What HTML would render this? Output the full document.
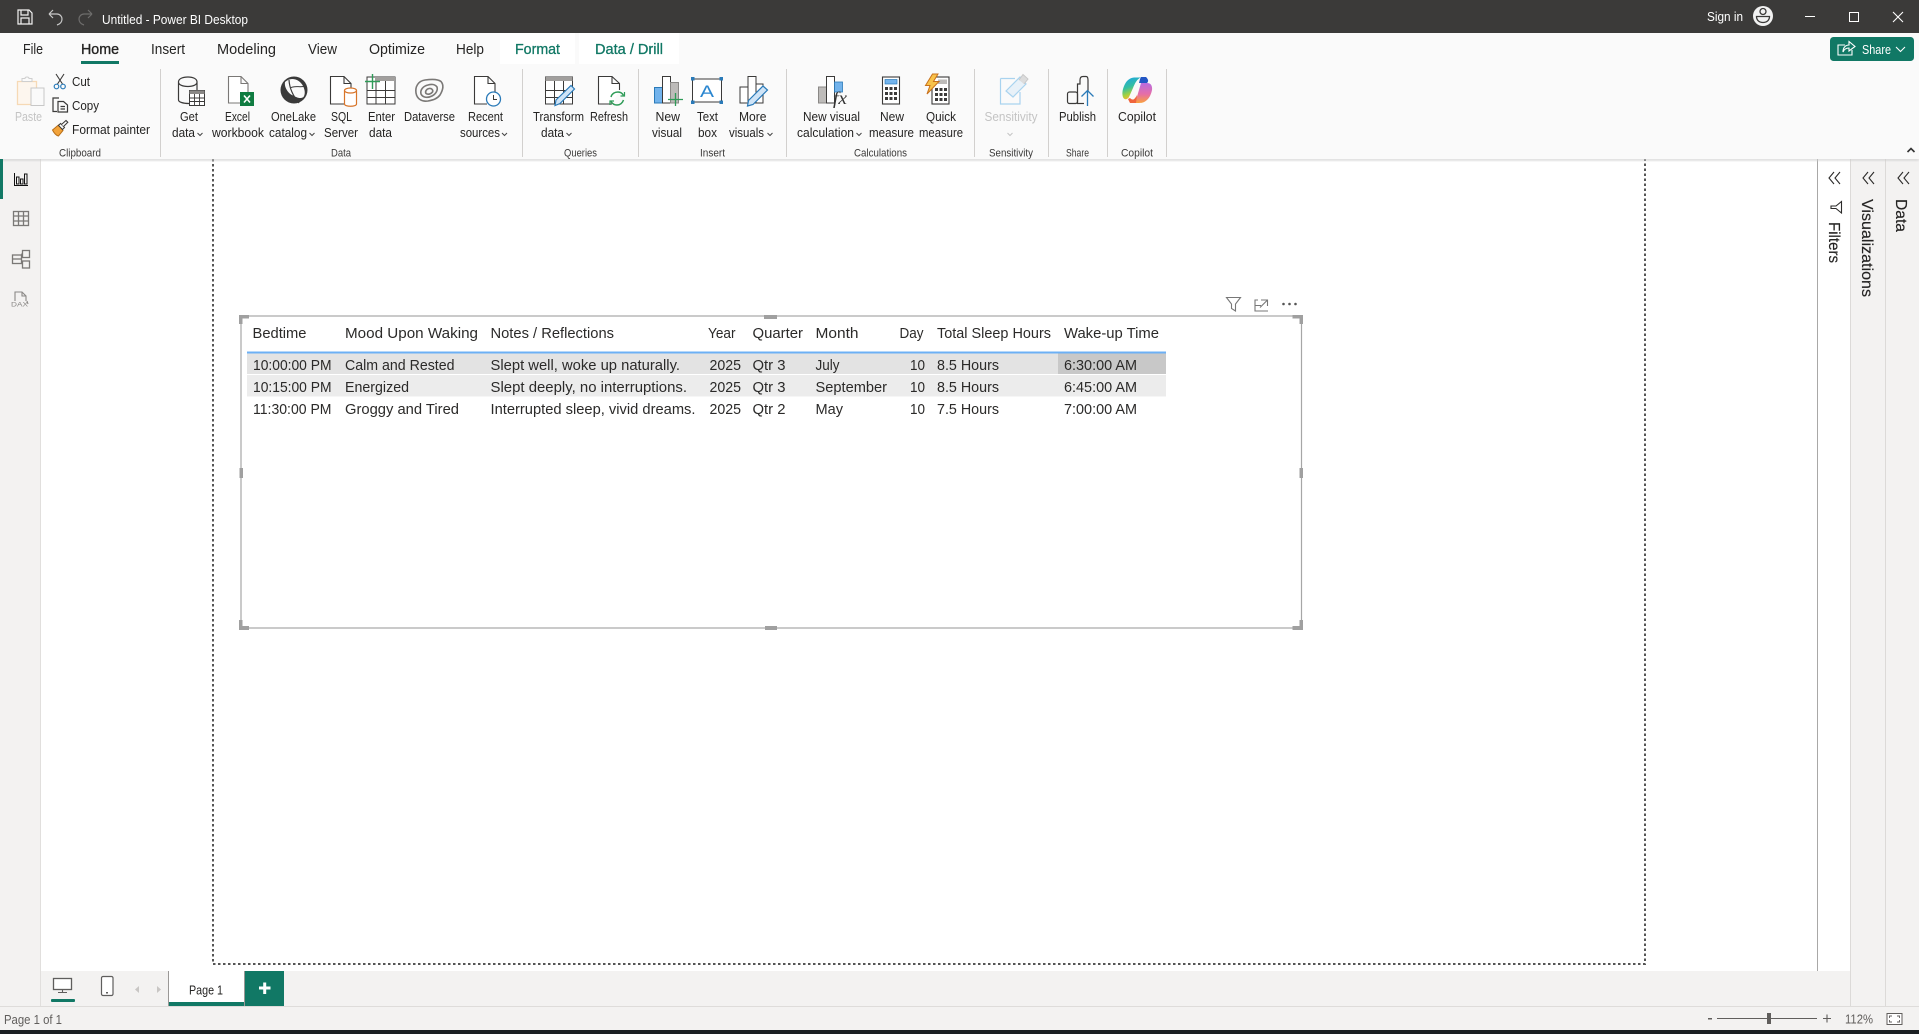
<!DOCTYPE html>
<html lang="en">
<head>
<meta charset="utf-8">
<title>Untitled - Power BI Desktop</title>
<style>
html,body{margin:0;padding:0;width:1919px;height:1034px;overflow:hidden;background:#fff}
svg{display:block;position:absolute;left:0;top:0}
text{font-family:"Liberation Sans",sans-serif;fill:#252423;white-space:pre}
.t{font-size:14.5px}
.sb{stroke:#252423;stroke-width:.35px}
.ac{fill:#117865;stroke:#117865;stroke-width:.3px}
.r{font-size:12.5px}
.g{font-size:11px;fill:#3b3a39}
.w{fill:#fff}
.d{fill:#c4c4c4}
.c{font-size:15px;fill:#2b2a29}
.ic{fill:none;stroke:#3b3a39;stroke-width:1.2}
.gy{fill:none;stroke:#7a7876;stroke-width:1.3}
.v{font-size:15.5px;stroke:#252423;stroke-width:.15px}
</style>
</head>
<body>
<svg width="1919" height="1034" viewBox="0 0 1919 1034" xmlns="http://www.w3.org/2000/svg">
<defs>
<linearGradient id="cp1" x1="0" y1="0" x2=".3" y2="1"><stop offset="0" stop-color="#1aa3e8"/><stop offset=".5" stop-color="#35c0a0"/><stop offset=".8" stop-color="#a6d13e"/><stop offset="1" stop-color="#f4b830"/></linearGradient>
<linearGradient id="cp2" x1=".5" y1="0" x2=".5" y2="1"><stop offset="0" stop-color="#b86ce0"/><stop offset=".55" stop-color="#e56ea8"/><stop offset="1" stop-color="#f9a13c"/></linearGradient>
<filter id="sh" x="0" y="0" width="100%" height="140%"><feGaussianBlur stdDeviation="1.5"/></filter>
</defs>

<!-- base -->
<rect width="1919" height="1034" fill="#fff"/>
<rect x="1818" y="159" width="33" height="812" fill="#fff"/>
<rect x="1851" y="159" width="68" height="847" fill="#f3f2f1"/>
<rect x="0" y="159" width="40" height="847" fill="#f3f2f1"/>
<rect x="40" y="159" width="1" height="847" fill="#e1dfdd"/>
<rect x="41" y="971" width="1810" height="35" fill="#f3f2f1"/>
<rect x="1817" y="159" width="1" height="812" fill="#a9a8a7"/>
<rect x="1850" y="159" width="1" height="847" fill="#dcdad8"/>
<rect x="1885" y="159" width="1" height="847" fill="#dcdad8"/>

<!-- canvas dotted -->
<path d="M213 159V964H1645V159" fill="none" stroke="#555" stroke-width="2" stroke-dasharray="2.5 2.5"/>

<!-- ribbon shadow + ribbon -->
<rect x="0" y="158" width="1919" height="2.500" fill="#ccc" filter="url(#sh)"/>
<rect x="0" y="33" width="1919" height="126" fill="#fafafa"/>
<rect x="500" y="33" width="75" height="31" fill="#fff"/>
<rect x="579" y="33" width="100" height="31" fill="#fff"/>

<!-- title bar -->
<rect x="0" y="0" width="1919" height="33" fill="#3b3a39"/>
<g fill="none" stroke="#f2f2f2" stroke-width="1.2">
<path d="M18 10H29L32 13V24H18Z"/><path d="M21 10V15H28V10"/><path d="M21 24V18H29V24"/>
</g>
<path d="M49 14H57C60 14 62 16.500 62 19C62 22 60 24 57 25M49 14L53 10M49 14L53 18" fill="none" stroke="#c8c8c8" stroke-width="1.200"/>
<path d="M92 14H84C81 14 79 16.500 79 19C79 22 81 24 84 25M92 14L88 10M92 14L88 18" fill="none" stroke="#6e6d6c" stroke-width="1.200"/>
<text x="102" y="24" class="w" style="font-size:12.500px" textLength="146" lengthAdjust="spacingAndGlyphs">Untitled - Power BI Desktop</text>
<text x="1707" y="21" class="w" style="font-size:12.500px" textLength="36" lengthAdjust="spacingAndGlyphs">Sign in</text>
<circle cx="1763" cy="16" r="10" fill="#f2f2f2"/>
<circle cx="1763" cy="11.500" r="3" fill="none" stroke="#3b3a39" stroke-width="1.300"/>
<path d="M1756.500 16.500H1769.500C1769.500 20 1767 22.500 1763 22.500C1759 22.500 1756.500 20 1756.500 16.500Z" fill="none" stroke="#3b3a39" stroke-width="1.300"/>
<rect x="1805" y="16" width="10" height="1" fill="#fff"/>
<rect x="1849.500" y="12.500" width="9" height="9" fill="none" stroke="#fff" stroke-width="1"/>
<path d="M1893 12L1903 22M1903 12L1893 22" stroke="#fff" stroke-width="1.100"/>

<!-- tabs -->
<text x="23" y="54" class="t" textLength="20" lengthAdjust="spacingAndGlyphs">File</text>
<text x="81" y="54" class="t sb" textLength="38" lengthAdjust="spacingAndGlyphs">Home</text>
<rect x="81" y="61" width="38" height="3" fill="#117865"/>
<text x="151" y="54" class="t" textLength="34" lengthAdjust="spacingAndGlyphs">Insert</text>
<text x="217" y="54" class="t" textLength="59" lengthAdjust="spacingAndGlyphs">Modeling</text>
<text x="308" y="54" class="t" textLength="29" lengthAdjust="spacingAndGlyphs">View</text>
<text x="369" y="54" class="t" textLength="56" lengthAdjust="spacingAndGlyphs">Optimize</text>
<text x="456" y="54" class="t" textLength="28" lengthAdjust="spacingAndGlyphs">Help</text>
<text x="515" y="54" class="t ac" textLength="45" lengthAdjust="spacingAndGlyphs">Format</text>
<text x="595" y="54" class="t ac" textLength="68" lengthAdjust="spacingAndGlyphs">Data / Drill</text>

<!-- share -->
<rect x="1830" y="37" width="84" height="24" rx="3.500" fill="#117865"/>
<path d="M1845 45H1838V55H1852V50M1843 52C1843 47 1846 45 1849 45V41.500L1855 46.500L1849 51V48C1846 48 1844 49.500 1843 52Z" fill="none" stroke="#fff" stroke-width="1.100"/>
<text x="1862" y="54" class="w" style="font-size:13px" textLength="29" lengthAdjust="spacingAndGlyphs">Share</text>
<path d="M1896 47L1900.500 51.500L1905 47" fill="none" stroke="#fff" stroke-width="1.100"/>
<path d="M1907.500 152L1911 148.500L1914.500 152" fill="none" stroke="#333" stroke-width="1.600"/>

<!-- separators -->
<g fill="#d2d0ce">
<rect x="160" y="69" width="1" height="88"/><rect x="522" y="69" width="1" height="88"/><rect x="638" y="69" width="1" height="88"/>
<rect x="786" y="69" width="1" height="88"/><rect x="974" y="69" width="1" height="88"/><rect x="1048" y="69" width="1" height="88"/>
<rect x="1107" y="69" width="1" height="88"/><rect x="1166" y="69" width="1" height="88"/>
</g>

<!-- ribbon labels -->
<g class="r">
<text x="15" y="121" class="r d" textLength="27" lengthAdjust="spacingAndGlyphs">Paste</text>
<text x="72" y="86" class="r" textLength="18" lengthAdjust="spacingAndGlyphs">Cut</text>
<text x="72" y="110" class="r" textLength="27" lengthAdjust="spacingAndGlyphs">Copy</text>
<text x="72" y="134" class="r" textLength="78" lengthAdjust="spacingAndGlyphs">Format painter</text>
<text x="180" y="121" class="r" textLength="18" lengthAdjust="spacingAndGlyphs">Get</text>
<text x="172" y="137" class="r" textLength="23" lengthAdjust="spacingAndGlyphs">data</text>
<text x="225" y="121" class="r" textLength="25" lengthAdjust="spacingAndGlyphs">Excel</text>
<text x="212" y="137" class="r" textLength="52" lengthAdjust="spacingAndGlyphs">workbook</text>
<text x="271" y="121" class="r" textLength="45" lengthAdjust="spacingAndGlyphs">OneLake</text>
<text x="269" y="137" class="r" textLength="38" lengthAdjust="spacingAndGlyphs">catalog</text>
<text x="331" y="121" class="r" textLength="21" lengthAdjust="spacingAndGlyphs">SQL</text>
<text x="324" y="137" class="r" textLength="34" lengthAdjust="spacingAndGlyphs">Server</text>
<text x="368" y="121" class="r" textLength="27" lengthAdjust="spacingAndGlyphs">Enter</text>
<text x="369" y="137" class="r" textLength="23" lengthAdjust="spacingAndGlyphs">data</text>
<text x="404" y="121" class="r" textLength="51" lengthAdjust="spacingAndGlyphs">Dataverse</text>
<text x="468" y="121" class="r" textLength="35" lengthAdjust="spacingAndGlyphs">Recent</text>
<text x="460" y="137" class="r" textLength="40" lengthAdjust="spacingAndGlyphs">sources</text>
<text x="533" y="121" class="r" textLength="51" lengthAdjust="spacingAndGlyphs">Transform</text>
<text x="541" y="137" class="r" textLength="23" lengthAdjust="spacingAndGlyphs">data</text>
<text x="590" y="121" class="r" textLength="38" lengthAdjust="spacingAndGlyphs">Refresh</text>
<text x="655.500" y="121" class="r" textLength="24.500" lengthAdjust="spacingAndGlyphs">New</text>
<text x="652" y="137" class="r" textLength="30" lengthAdjust="spacingAndGlyphs">visual</text>
<text x="697" y="121" class="r" textLength="21" lengthAdjust="spacingAndGlyphs">Text</text>
<text x="698" y="137" class="r" textLength="19" lengthAdjust="spacingAndGlyphs">box</text>
<text x="739" y="121" class="r" textLength="27.500" lengthAdjust="spacingAndGlyphs">More</text>
<text x="729" y="137" class="r" textLength="35" lengthAdjust="spacingAndGlyphs">visuals</text>
<text x="803" y="121" class="r" textLength="57" lengthAdjust="spacingAndGlyphs">New visual</text>
<text x="797" y="137" class="r" textLength="57" lengthAdjust="spacingAndGlyphs">calculation</text>
<text x="880" y="121" class="r" textLength="24" lengthAdjust="spacingAndGlyphs">New</text>
<text x="869" y="137" class="r" textLength="45" lengthAdjust="spacingAndGlyphs">measure</text>
<text x="926" y="121" class="r" textLength="30" lengthAdjust="spacingAndGlyphs">Quick</text>
<text x="919" y="137" class="r" textLength="44" lengthAdjust="spacingAndGlyphs">measure</text>
<text x="984.500" y="121" class="r d" textLength="53" lengthAdjust="spacingAndGlyphs">Sensitivity</text>
<text x="1059" y="121" class="r" textLength="37" lengthAdjust="spacingAndGlyphs">Publish</text>
<text x="1118" y="121" class="r" textLength="38" lengthAdjust="spacingAndGlyphs">Copilot</text>
</g>
<g fill="none" stroke="#444" stroke-width="1">
<path d="M197.500 133L200 135.500L202.500 133"/><path d="M309.500 133L312 135.500L314.500 133"/><path d="M502 133L504.500 135.500L507 133"/>
<path d="M566.500 133L569 135.500L571.500 133"/><path d="M767.500 133L770 135.500L772.500 133"/><path d="M856.500 133L859 135.500L861.500 133"/>
<path d="M1007.500 133L1010 135.500L1012.500 133" stroke="#c4c4c4"/>
</g>
<!-- group labels -->
<text x="59" y="156.500" class="g" textLength="42" lengthAdjust="spacingAndGlyphs">Clipboard</text>
<text x="331" y="156.500" class="g" textLength="20" lengthAdjust="spacingAndGlyphs">Data</text>
<text x="564" y="156.500" class="g" textLength="33" lengthAdjust="spacingAndGlyphs">Queries</text>
<text x="700" y="156.500" class="g" textLength="25" lengthAdjust="spacingAndGlyphs">Insert</text>
<text x="854" y="156.500" class="g" textLength="53" lengthAdjust="spacingAndGlyphs">Calculations</text>
<text x="989" y="156.500" class="g" textLength="44" lengthAdjust="spacingAndGlyphs">Sensitivity</text>
<text x="1066" y="156.500" class="g" textLength="23" lengthAdjust="spacingAndGlyphs">Share</text>
<text x="1121" y="156.500" class="g" textLength="32" lengthAdjust="spacingAndGlyphs">Copilot</text>

<!-- paste -->
<path d="M17.500 81.500H36.500V104.500H17.500Z" fill="#fdf6ee" stroke="#f6d9b5" stroke-width="1.300"/>
<path d="M22 81.500V78.500H25C25 76.500 29 76.500 29 78.500H32V81.500Z" fill="#fafafa" stroke="#cfcfcf" stroke-width="1"/>
<rect x="31" y="88" width="13" height="17.500" fill="#fafafa" stroke="#c8c8c8" stroke-width="1"/>
<!-- cut -->
<path d="M56 74L62.500 84M64 74L57.500 84" fill="none" stroke="#3b3a39" stroke-width="1.100"/>
<circle cx="56.500" cy="86.500" r="2.300" fill="none" stroke="#2a7ab8" stroke-width="1.200"/>
<circle cx="63" cy="86.500" r="2.300" fill="none" stroke="#2a7ab8" stroke-width="1.200"/>
<!-- copy -->
<path d="M59 98H53V111.500H57" class="ic"/>
<path d="M58 101.500H63.500L67.500 105V112H58Z" class="ic"/>
<path d="M60.500 106.500H65M60.500 109H65" class="ic" stroke-width=".9"/>
<!-- format painter -->
<path d="M52.500 130L58.500 125L63 130.500L58.500 136C56 135.500 54 133 52.500 130Z" fill="#f2a33a" stroke="#b96f18" stroke-width="1"/>
<path d="M58.500 125.500L60.500 123.500L64.500 127.500L62.500 129.500Z" fill="#fff" stroke="#3b3a39" stroke-width="1"/>
<path d="M61.500 124.500L66 120.500L67.800 122.300L63.500 126.500" fill="#fff" stroke="#3b3a39" stroke-width="1.100"/>
<!-- get data -->
<path d="M178.500 82V100C178.500 102 183 103.500 189 103.500M197 81.500V90M178.500 82C178.500 79 182 77 188 77C193.500 77 197 79 197 82C197 84.500 193.500 86.500 188 86.500C182 86.500 178.500 84.500 178.500 82Z" class="ic" fill="#fafafa"/>
<rect x="189.500" y="90.500" width="15" height="15" fill="#fff" stroke="#3b3a39" stroke-width="1"/>
<rect x="189.500" y="90.500" width="15" height="3.500" fill="#8a8886"/>
<path d="M189.500 98H204.500M189.500 101.500H204.500M194.500 94V105M199.500 94V105" stroke="#3b3a39" stroke-width=".9" fill="none"/>
<!-- excel -->
<path d="M240 103H228.500V76.500H241L248 83.500V92M241 76.500V83.500H248" fill="#fff" stroke="#7a7876" stroke-width="1.100"/>
<rect x="240" y="92" width="14" height="14" fill="#107c41"/>
<path d="M244 95.500L250 102.500M250 95.500L244 102.500" stroke="#fff" stroke-width="1.600"/>
<!-- onelake -->
<circle cx="294" cy="90" r="13.500" fill="#3a3a3a"/>
<path d="M285 82C287 80 290 79 292 79C297 79 301 82 303 86C305 90 305.500 94 303.500 97C300 99.500 296 97 292 95C288 93 284 87 285 82Z" fill="#fafafa"/>
<path d="M289 80C289.500 88 293 96 299 103" fill="none" stroke="#3a3a3a" stroke-width="1.200"/>
<path d="M290 88C295 85 300 88 306 86" fill="none" stroke="#3a3a3a" stroke-width="1"/>
<!-- sql -->
<path d="M345 104H330.500V76.500H344L351 83.500V88M344 76.500V83.500H351" fill="#fff" stroke="#3b3a39" stroke-width="1.100"/>
<path d="M344.500 91V104C344.500 107 356.500 107 356.500 104V91Z" fill="#fff" stroke="#d8752a" stroke-width="1.200"/>
<ellipse cx="350.500" cy="90.500" rx="6" ry="2.500" fill="#fff" stroke="#d8752a" stroke-width="1.200"/>
<!-- enter data -->
<rect x="367" y="77" width="28" height="27" fill="#fff" stroke="#3b3a39" stroke-width="1"/>
<rect x="375" y="77" width="20" height="4" fill="#a19f9d"/>
<path d="M367 90.500H395M367 97.500H395M376 81V104M385.500 81V104" stroke="#3b3a39" stroke-width="1" fill="none"/>
<path d="M372.500 74V89M365 81.500H380" stroke="#2e9b57" stroke-width="1.400" fill="none"/>
<!-- dataverse -->
<g fill="none" stroke="#7a7876" stroke-width="1.600">
<path d="M425 80C418 81 415 87 416 93C417 99 422 102 428 101C433 100 437 99 440 95C443 90 444 85 441 81.500C438 79 432 79 425 80Z"/>
<path d="M428 85C423 86 420 90 421 94C423 98 428 98 432 96C436 94 438 90 437 87C435 84 431 84 428 85Z"/>
<path d="M429 88.500C426 89 425 92 426 93.500C428 95 431 94 432.500 92C433.500 90 431.500 88 429 88.500Z"/>
</g>
<!-- recent -->
<path d="M487 104H474.500V76.500H488L495 83.500V92M488 76.500V83.500H495" fill="#fff" stroke="#3b3a39" stroke-width="1.100"/>
<circle cx="493.500" cy="99" r="7" fill="#fff" stroke="#2a7ab8" stroke-width="1.300"/>
<path d="M493.500 95V99.500H497" fill="none" stroke="#3b3a39" stroke-width="1"/>
<!-- transform -->
<rect x="545.500" y="77" width="27" height="27" fill="#fff" stroke="#3b3a39" stroke-width="1"/>
<rect x="545.500" y="77" width="27" height="4" fill="#a19f9d"/>
<path d="M545.500 90.500H572.500M545.500 97.500H572.500M554.500 81V104M563.500 81V104" stroke="#3b3a39" stroke-width="1" fill="none"/>
<path d="M555 105.500L556 100L571 85.500L574.500 89L560 103.500Z" fill="#cfe4f7" stroke="#2a7ab8" stroke-width="1.200"/>
<!-- refresh -->
<path d="M612 104H598.500V76.500H612L619.500 83.500V90M612 76.500V83.500H619.500" fill="#fff" stroke="#3b3a39" stroke-width="1.100"/>
<path d="M611 97C612 93.500 615 92 618 92C620.500 92 622.500 93.500 623.500 95.500M623.500 100C622.500 103 620 105 617 105C614.500 105 612.500 104 611 101.500" fill="none" stroke="#2e9b57" stroke-width="1.500"/>
<path d="M624.500 92V96H620.500M610 105V101H614" fill="none" stroke="#2e9b57" stroke-width="1.200"/>
<!-- new visual -->
<rect x="654.500" y="87.500" width="8" height="15.500" fill="#72b3ec" stroke="#2a7ab8" stroke-width="1"/>
<rect x="662.500" y="76.500" width="8" height="26.500" fill="#fff" stroke="#3b3a39" stroke-width="1"/>
<rect x="670.500" y="82.500" width="8" height="20.500" fill="#bdbbb9" stroke="#8a8886" stroke-width="1"/>
<path d="M675.500 93V106M668 99.500H683" stroke="#2e9b57" stroke-width="1.300" fill="none"/>
<!-- text box -->
<rect x="692.500" y="79" width="29" height="23" fill="#fff" stroke="#3b3a39" stroke-width="1"/>
<g fill="#2a7ab8"><rect x="691" y="77" width="3.500" height="3.500"/><rect x="719.500" y="77" width="3.500" height="3.500"/><rect x="691" y="100.500" width="3.500" height="3.500"/><rect x="719.500" y="100.500" width="3.500" height="3.500"/></g>
<text x="700" y="97" style="font-size:17px;fill:#2a86d0" textLength="14" lengthAdjust="spacingAndGlyphs">A</text>
<!-- more visuals -->
<rect x="740" y="87" width="8" height="16" fill="#fff" stroke="#3b3a39" stroke-width="1"/>
<rect x="748" y="76.500" width="8" height="26.500" fill="#fff" stroke="#3b3a39" stroke-width="1"/>
<rect x="756" y="84" width="7" height="19" fill="#fff" stroke="#3b3a39" stroke-width="1"/>
<path d="M747.500 106L748.500 100.500L763 86L767.500 90L753 104.500Z" fill="#cfe4f7" stroke="#2a7ab8" stroke-width="1.200"/>
<!-- new visual calc -->
<rect x="818.500" y="87" width="8" height="16" fill="#bdbbb9" stroke="#8a8886" stroke-width="1"/>
<rect x="826.500" y="76.500" width="8" height="26.500" fill="#fff" stroke="#3b3a39" stroke-width="1"/>
<rect x="834.500" y="82" width="8" height="10" fill="#72b3ec" stroke="#2a7ab8" stroke-width=".8"/>
<text x="833" y="104" style="font-family:'Liberation Serif',serif;font-style:italic;font-size:18px;fill:#333" textLength="14" lengthAdjust="spacingAndGlyphs">fx</text>
<!-- new measure -->
<rect x="882.500" y="77" width="17" height="27" fill="#fff" stroke="#3b3a39" stroke-width="1.100"/>
<rect x="885" y="79.500" width="12" height="4.500" fill="#72b3ec" stroke="#2a7ab8" stroke-width=".7"/>
<g fill="#3b3a39"><rect x="885" y="87" width="3" height="3"/><rect x="889.500" y="87" width="3" height="3"/><rect x="894" y="87" width="3" height="3"/><rect x="885" y="92" width="3" height="3"/><rect x="889.500" y="92" width="3" height="3"/><rect x="894" y="92" width="3" height="3"/><rect x="885" y="97" width="3" height="3"/><rect x="889.500" y="97" width="3" height="3"/><rect x="894" y="97" width="3" height="3"/></g>
<!-- quick measure -->
<rect x="932" y="77" width="17" height="27" fill="#fff" stroke="#3b3a39" stroke-width="1.100"/>
<rect x="938" y="79.500" width="9" height="4.500" fill="#bdbbb9"/>
<g fill="#3b3a39"><rect x="935" y="88" width="3" height="3"/><rect x="939.500" y="88" width="3" height="3"/><rect x="944" y="88" width="3" height="3"/><rect x="935" y="93" width="3" height="3"/><rect x="939.500" y="93" width="3" height="3"/><rect x="944" y="93" width="3" height="3"/><rect x="935" y="98" width="3" height="3"/><rect x="939.500" y="98" width="3" height="3"/><rect x="944" y="98" width="3" height="3"/></g>
<path d="M932.500 74L925.500 85.500H930L927 94L939 81.500H933.500L938 74Z" fill="#f8c24a" stroke="#c8701a" stroke-width="1"/>
<!-- sensitivity -->
<path d="M1000.500 78.500H1015M1000.500 78.500V104H1020V92" fill="none" stroke="#a9d3ef" stroke-width="1.200"/>
<path d="M1006 91L1020 77L1026 84L1013 97Z" fill="#e8f1f8" stroke="#a9d3ef" stroke-width="1.200"/>
<path d="M1019 80L1023 74.500L1028 79L1024 84" fill="#dcdcdc" stroke="#c8c8c8" stroke-width="1"/>
<!-- publish -->
<g fill="none" stroke="#3b3a39" stroke-width="1.200">
<rect x="1067.500" y="92" width="10" height="11.500" rx="2"/>
<path d="M1077.500 103.500V84H1080V80C1080 78 1081 76.500 1083 76.500H1086C1087.500 76.500 1088 78 1088 80V92"/>
<path d="M1077 103.500H1084"/>
</g>
<path d="M1087.500 106V91M1081.500 96.500L1087.500 90.500L1093.500 96.500" fill="none" stroke="#2a7ab8" stroke-width="1.300"/>
<!-- copilot -->
<path d="M1125 84C1127 80 1130 78 1134 77.500H1141C1137 79 1135 83 1133 88L1129 97C1127 100.500 1123 100 1122.500 95C1122 91 1123.500 87 1125 84Z" fill="url(#cp1)"/>
<path d="M1141 77H1146C1148 79 1149 81 1147 83H1139L1140 79Z" fill="#2356c4"/>
<path d="M1141 83H1147C1151 83 1152.500 86 1152 90C1151 95 1149 99 1145 101.500C1143 103 1140 103 1134 103H1131C1134 102 1136 99 1137.500 95Z" fill="url(#cp2)"/>
<path d="M1130 98C1132 100 1134 101 1137 95L1136 103H1130L1128 99Z" fill="#f0643c"/>

<!-- left rail -->
<rect x="0" y="159" width="3" height="40" fill="#117865"/>
<path d="M14.500 173V185.500H28" fill="none" stroke="#111" stroke-width="1"/>
<g fill="none" stroke="#111" stroke-width="1"><rect x="16.500" y="177" width="2.500" height="7"/><rect x="20.500" y="179" width="2.500" height="5"/><rect x="24.500" y="174" width="2.500" height="10"/></g>
<g class="gy"><rect x="13.500" y="211.500" width="15" height="14"/><path d="M13.500 216H28.500M13.500 221H28.500M18.500 212V225M23.500 212V225"/></g>
<g class="gy"><rect x="12.500" y="255" width="9" height="8.500"/><path d="M12.500 259H21.500"/><rect x="22.500" y="250.500" width="7" height="7"/><rect x="22.500" y="261" width="7" height="7"/><path d="M21.500 255L22.500 253M21.500 263L22.500 264"/></g>
<path d="M15 301V292H22L26 296V301M22 292V296H26M27 301L28 304" fill="none" stroke="#8a8886" stroke-width="1.100"/>
<text x="11" y="306.500" style="font-size:6.500px;fill:#8a8886" textLength="17" lengthAdjust="spacingAndGlyphs">DAX</text>

<!-- visual frame -->
<rect x="241" y="316" width="1060.500" height="312" fill="#fff" stroke="#a6a6a6" stroke-width="1.200"/>
<g fill="#a0a0a0">
<path d="M239 315H249V318.500H242.500V324H239Z"/>
<path d="M1292.500 315H1303V324H1299.500V318.500H1292.500Z"/>
<path d="M239 620H242.500V626H249V630H239Z"/>
<path d="M1299.500 620H1303V630H1292.500V626H1299.500Z"/>
<rect x="764" y="315" width="13" height="4"/><rect x="765" y="626" width="12" height="4"/>
<rect x="239.500" y="468" width="3.500" height="10"/><rect x="1299.500" y="468" width="3.500" height="10"/>
</g>
<path d="M1226.500 297.500H1240.500L1235.500 304V311L1231.500 308.500V304Z" fill="none" stroke="#777" stroke-width="1.100"/>
<path d="M1261 300H1267.500V306M1267.500 300L1260 307.500M1255 305V311H1268M1255 305V300H1258M1261 305.500H1255" fill="none" stroke="#777" stroke-width="1.100"/>
<g fill="#555"><circle cx="1283.500" cy="304" r="1.300"/><circle cx="1289.500" cy="304" r="1.300"/><circle cx="1295.500" cy="304" r="1.300"/></g>

<!-- table -->
<rect x="247" y="353.500" width="919" height="20.500" fill="#e3e3e3"/>
<rect x="247" y="375" width="919" height="21.500" fill="#ececec"/>
<rect x="1058" y="353.500" width="108" height="20.500" fill="#c8c8c8"/>
<rect x="247" y="351.500" width="919" height="2" fill="#6cb0f5"/>
<g class="c">
<text x="252.500" y="338" class="c" textLength="54" lengthAdjust="spacingAndGlyphs">Bedtime</text>
<text x="345" y="338" class="c" textLength="133" lengthAdjust="spacingAndGlyphs">Mood Upon Waking</text>
<text x="490.500" y="338" class="c" textLength="123.500" lengthAdjust="spacingAndGlyphs">Notes / Reflections</text>
<text x="708" y="338" class="c" textLength="27.500" lengthAdjust="spacingAndGlyphs">Year</text>
<text x="752.500" y="338" class="c" textLength="50.500" lengthAdjust="spacingAndGlyphs">Quarter</text>
<text x="815.500" y="338" class="c" textLength="43" lengthAdjust="spacingAndGlyphs">Month</text>
<text x="899.500" y="338" class="c" textLength="24" lengthAdjust="spacingAndGlyphs">Day</text>
<text x="937" y="338" class="c" textLength="114" lengthAdjust="spacingAndGlyphs">Total Sleep Hours</text>
<text x="1064" y="338" class="c" textLength="95" lengthAdjust="spacingAndGlyphs">Wake-up Time</text>

<text x="253" y="370" class="c" textLength="78.500" lengthAdjust="spacingAndGlyphs">10:00:00 PM</text>
<text x="345" y="370" class="c" textLength="109.500" lengthAdjust="spacingAndGlyphs">Calm and Rested</text>
<text x="490.500" y="370" class="c" textLength="189.500" lengthAdjust="spacingAndGlyphs">Slept well, woke up naturally.</text>
<text x="709.500" y="370" class="c" textLength="31.500" lengthAdjust="spacingAndGlyphs">2025</text>
<text x="752.500" y="370" class="c" textLength="33" lengthAdjust="spacingAndGlyphs">Qtr 3</text>
<text x="815.500" y="370" class="c" textLength="24" lengthAdjust="spacingAndGlyphs">July</text>
<text x="910" y="370" class="c" textLength="15" lengthAdjust="spacingAndGlyphs">10</text>
<text x="937" y="370" class="c" textLength="62" lengthAdjust="spacingAndGlyphs">8.5 Hours</text>
<text x="1064" y="370" class="c" textLength="73" lengthAdjust="spacingAndGlyphs">6:30:00 AM</text>

<text x="253" y="392" class="c" textLength="78.500" lengthAdjust="spacingAndGlyphs">10:15:00 PM</text>
<text x="345" y="392" class="c" textLength="64" lengthAdjust="spacingAndGlyphs">Energized</text>
<text x="490.500" y="392" class="c" textLength="196.500" lengthAdjust="spacingAndGlyphs">Slept deeply, no interruptions.</text>
<text x="709.500" y="392" class="c" textLength="31.500" lengthAdjust="spacingAndGlyphs">2025</text>
<text x="752.500" y="392" class="c" textLength="33" lengthAdjust="spacingAndGlyphs">Qtr 3</text>
<text x="815.500" y="392" class="c" textLength="71.500" lengthAdjust="spacingAndGlyphs">September</text>
<text x="910" y="392" class="c" textLength="15" lengthAdjust="spacingAndGlyphs">10</text>
<text x="937" y="392" class="c" textLength="62" lengthAdjust="spacingAndGlyphs">8.5 Hours</text>
<text x="1064" y="392" class="c" textLength="73" lengthAdjust="spacingAndGlyphs">6:45:00 AM</text>

<text x="253" y="414" class="c" textLength="78.500" lengthAdjust="spacingAndGlyphs">11:30:00 PM</text>
<text x="345" y="414" class="c" textLength="114" lengthAdjust="spacingAndGlyphs">Groggy and Tired</text>
<text x="490.500" y="414" class="c" textLength="205" lengthAdjust="spacingAndGlyphs">Interrupted sleep, vivid dreams.</text>
<text x="709.500" y="414" class="c" textLength="31.500" lengthAdjust="spacingAndGlyphs">2025</text>
<text x="752.500" y="414" class="c" textLength="33" lengthAdjust="spacingAndGlyphs">Qtr 2</text>
<text x="815.500" y="414" class="c" textLength="27.500" lengthAdjust="spacingAndGlyphs">May</text>
<text x="910" y="414" class="c" textLength="15" lengthAdjust="spacingAndGlyphs">10</text>
<text x="937" y="414" class="c" textLength="62" lengthAdjust="spacingAndGlyphs">7.5 Hours</text>
<text x="1064" y="414" class="c" textLength="73" lengthAdjust="spacingAndGlyphs">7:00:00 AM</text>
</g>

<!-- right panes -->
<g fill="none" stroke="#2b2a29" stroke-width="1.100">
<path d="M1834 172L1829 178L1834 184M1840 172L1835 178L1840 184"/>
<path d="M1868 172L1863 178L1868 184M1874 172L1869 178L1874 184"/>
<path d="M1903 172L1898 178L1903 184M1909 172L1904 178L1909 184"/>
<path d="M1841.500 201.500V213L1836 208.500H1831V206H1836Z"/>
</g>
<text x="1829" y="222" transform="rotate(90 1829 222)" class="v" textLength="41" lengthAdjust="spacingAndGlyphs">Filters</text>
<text x="1862" y="199" transform="rotate(90 1862 199)" class="v" textLength="98" lengthAdjust="spacingAndGlyphs">Visualizations</text>
<text x="1896" y="199" transform="rotate(90 1896 199)" class="v" textLength="33" lengthAdjust="spacingAndGlyphs">Data</text>

<!-- page tabs -->
<rect x="53.500" y="978.500" width="18" height="11" fill="#fff" stroke="#5f5e5d" stroke-width="1.300"/>
<path d="M62.500 990V992M58 992.500H67" stroke="#5f5e5d" stroke-width="1.100" fill="none"/>
<rect x="51" y="999" width="24" height="3" rx="1" fill="#117865"/>
<rect x="101.500" y="976.500" width="11.500" height="19" rx="1.500" fill="#fff" stroke="#5f5e5d" stroke-width="1.200"/>
<rect x="106" y="992" width="2" height="1.500" fill="#5f5e5d"/>
<path d="M139 986V993L135 989.500Z" fill="#c8c6c4"/>
<path d="M157 986V993L161 989.500Z" fill="#c8c6c4"/>
<rect x="168" y="971" width="77" height="35" fill="#fff"/>
<rect x="168" y="971" width="1" height="35" fill="#9a9896"/>
<rect x="244" y="971" width="1" height="35" fill="#9a9896"/>
<rect x="169" y="1002" width="75" height="4" fill="#117865"/>
<text x="189" y="994.500" style="font-size:13px" textLength="34" lengthAdjust="spacingAndGlyphs">Page 1</text>
<rect x="245" y="971" width="39" height="35" fill="#117865"/>
<path d="M259 988H270.500M264.700 982.500V994" stroke="#fff" stroke-width="3" fill="none"/>

<!-- status -->
<rect x="0" y="1006" width="1919" height="24" fill="#f3f2f1"/>
<rect x="0" y="1006" width="1919" height="1" fill="#dedcda"/>
<rect x="0" y="1030" width="1919" height="4" fill="#1b2023"/>
<text x="4" y="1024" style="font-size:12.500px;fill:#605e5c" textLength="58" lengthAdjust="spacingAndGlyphs">Page 1 of 1</text>
<rect x="1708" y="1018" width="4" height="1.500" fill="#605e5c"/>
<rect x="1717" y="1018" width="100" height="1" fill="#605e5c"/>
<rect x="1767" y="1013" width="4" height="11" fill="#605e5c"/>
<path d="M1823 1018.500H1831M1827 1014.500V1022.500" stroke="#605e5c" stroke-width="1.100"/>
<text x="1845" y="1023.500" style="font-size:12.500px;fill:#605e5c" textLength="28" lengthAdjust="spacingAndGlyphs">112%</text>
<rect x="1887" y="1013.500" width="15" height="11" fill="#fff" stroke="#605e5c" stroke-width="1"/>
<path d="M1889.500 1018V1016H1892M1897 1016H1899.500V1018M1899.500 1020V1022H1897M1892 1022H1889.500V1020" fill="none" stroke="#605e5c" stroke-width=".9"/>
</svg>
</body>
</html>
